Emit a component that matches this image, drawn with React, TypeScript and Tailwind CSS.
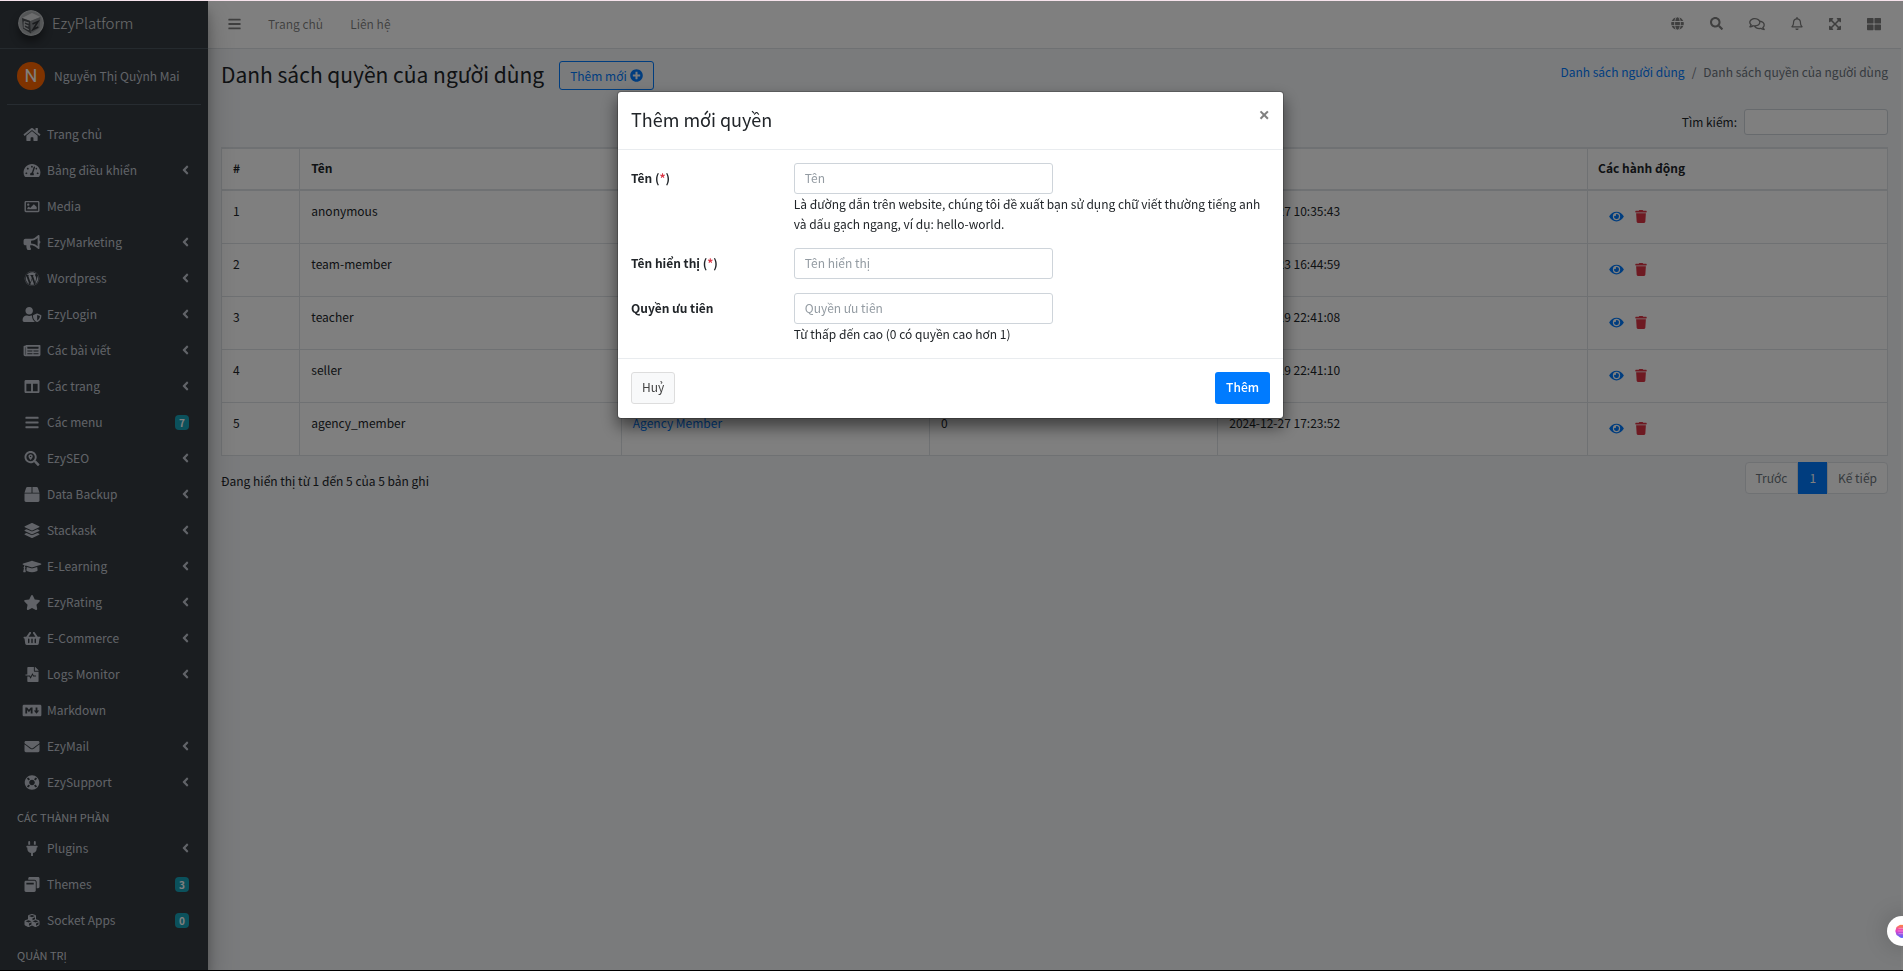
import { useState } from 'react';
import type { IconType } from 'react-icons';
import {
  FaAngleLeft,
  FaBars,
  FaBox,
  FaBullhorn,
  FaColumns,
  FaCubes,
  FaEnvelope,
  FaExpandArrowsAlt,
  FaEye,
  FaFileMedicalAlt,
  FaGlobe,
  FaGraduationCap,
  FaHome,
  FaLayerGroup,
  FaLifeRing,
  FaMarkdown,
  FaNewspaper,
  FaPlug,
  FaPlusCircle,
  FaRegBell,
  FaRegComments,
  FaRegImage,
  FaSearch,
  FaSearchLocation,
  FaShoppingBasket,
  FaStar,
  FaTachometerAlt,
  FaThLarge,
  FaTrash,
  FaUserShield,
  FaWindowRestore,
  FaWordpress,
} from 'react-icons/fa';

type MenuItem = {
  icon: IconType;
  label: string;
  badge?: number;
  arrow?: boolean;
};

const mainMenu: MenuItem[] = [
  { icon: FaHome, label: 'Trang chủ' },
  { icon: FaTachometerAlt, label: 'Bảng điều khiển', arrow: true },
  { icon: FaRegImage, label: 'Media' },
  { icon: FaBullhorn, label: 'EzyMarketing', arrow: true },
  { icon: FaWordpress, label: 'Wordpress', arrow: true },
  { icon: FaUserShield, label: 'EzyLogin', arrow: true },
  { icon: FaNewspaper, label: 'Các bài viết', arrow: true },
  { icon: FaColumns, label: 'Các trang', arrow: true },
  { icon: FaBars, label: 'Các menu', badge: 7 },
  { icon: FaSearchLocation, label: 'EzySEO', arrow: true },
  { icon: FaBox, label: 'Data Backup', arrow: true },
  { icon: FaLayerGroup, label: 'Stackask', arrow: true },
  { icon: FaGraduationCap, label: 'E-Learning', arrow: true },
  { icon: FaStar, label: 'EzyRating', arrow: true },
  { icon: FaShoppingBasket, label: 'E-Commerce', arrow: true },
  { icon: FaFileMedicalAlt, label: 'Logs Monitor', arrow: true },
  { icon: FaMarkdown, label: 'Markdown' },
  { icon: FaEnvelope, label: 'EzyMail', arrow: true },
  { icon: FaLifeRing, label: 'EzySupport', arrow: true },
];

const componentMenu: MenuItem[] = [
  { icon: FaPlug, label: 'Plugins', arrow: true },
  { icon: FaWindowRestore, label: 'Themes', badge: 3 },
  { icon: FaCubes, label: 'Socket Apps', badge: 0 },
];

const roles = [
  { id: 1, name: 'anonymous', displayName: 'Anonymous', priority: 0, createdAt: '2024-12-27 10:35:43' },
  { id: 2, name: 'team-member', displayName: 'Team Member', priority: 0, createdAt: '2024-12-23 16:44:59' },
  { id: 3, name: 'teacher', displayName: 'Teacher', priority: 0, createdAt: '2024-12-19 22:41:08' },
  { id: 4, name: 'seller', displayName: 'Seller', priority: 0, createdAt: '2024-12-19 22:41:10' },
  { id: 5, name: 'agency_member', displayName: 'Agency Member', priority: 0, createdAt: '2024-12-27 17:23:52' },
];

function Logo() {
  return (
    <svg viewBox="0 0 26 26" className="h-[26px] w-[26px] rounded-full shadow-[0_6px_8px_rgba(0,0,0,0.4)]">
      <circle cx="13" cy="13" r="13" fill="#b9bcbf" />
      <circle cx="13" cy="13" r="11.5" fill="#a9acaf" />
      <path d="M4 8 L14 3 L22.5 7 L12.5 11 Z" fill="#d9dbdd" />
      <path d="M4 8 L12.5 11 L13 23.5 L5 18.5 Z" fill="#4a4e52" />
      <path d="M12.5 11 L22.5 7 L21.5 18 L13 23.5 Z" fill="#84888c" />
      <path d="M6 11.5 L10.8 13.2 M6.2 11.5 V17.3 L10.8 19.8 M6.2 14.4 L10.4 16.2" stroke="#b9bcbf" strokeWidth="1.3" fill="none" />
      <path d="M14.5 14 L20 11.5 L15 19.5 L20.3 17" stroke="#33373b" strokeWidth="1.6" fill="none" />
    </svg>
  );
}

function MenuList({ items }: { items: MenuItem[] }) {
  return (
    <ul>
      {items.map(({ icon: Icon, label, badge, arrow }) => (
        <li key={label}>
          <a href="#" className="flex h-9 items-center gap-[3px] px-[19px]">
            <span className="flex w-[25px] justify-center">
              <Icon className="h-[15px] w-5" />
            </span>
            <span className="flex-1">{label}</span>
            {arrow && <FaAngleLeft className="h-[14px] w-[7px]" />}
            {badge !== undefined && (
              <span className="rounded bg-[#17a2b8] px-1 text-[10px] leading-[15px] font-bold text-white">
                {badge}
              </span>
            )}
          </a>
        </li>
      ))}
    </ul>
  );
}

function Sidebar() {
  return (
    <aside className="relative z-10 w-52 shrink-0 bg-[#343a40] text-[#c2c7d0] shadow-[0_14px_28px_rgba(0,0,0,0.25),0_10px_10px_rgba(0,0,0,0.22)]">
      <a href="#" className="flex h-12 items-center gap-2 border-b border-[#4b545c] pb-1 pl-[18px]">
        <Logo />
        <span className="text-[15px] leading-6 font-light text-white/80">EzyPlatform</span>
      </a>
      <div className="mx-[7px] flex h-14 items-center gap-[9px] border-b border-[#4f5962] pb-0.5 pl-[10px]">
        <span className="flex h-7 w-7 items-center justify-center rounded-full bg-[#ff6600] font-[Roboto] text-lg leading-7 text-white">
          N
        </span>
        <a href="#">Nguyễn Thị Quỳnh Mai</a>
      </div>
      <nav className="mt-[11px]">
        <MenuList items={mainMenu} />
        <div className="flex h-[30px] items-center pt-1 pl-[17px] text-[11px] text-[#d0d4db]">CÁC THÀNH PHẦN</div>
        <MenuList items={componentMenu} />
        <div className="flex h-[30px] items-center pt-1 pl-[17px] text-[11px] text-[#d0d4db]">QUẢN TRỊ</div>
      </nav>
    </aside>
  );
}

function Navbar() {
  return (
    <header className="flex h-12 items-center justify-between border-b border-[#dee2e6] bg-white px-5 pb-0.5 text-black/50">
      <div className="flex items-center gap-[27px]">
        <button type="button" aria-label="Menu"><FaBars className="h-[14px] w-[13px]" /></button>
        <a href="#">Trang chủ</a>
        <a href="#">Liên hệ</a>
      </div>
      <div className="flex items-center gap-[26px]">
        <button type="button" aria-label="Ngôn ngữ"><FaGlobe className="h-[13px] w-[13px]" /></button>
        <button type="button" aria-label="Tìm kiếm"><FaSearch className="h-[13px] w-[13px]" /></button>
        <button type="button" aria-label="Tin nhắn"><FaRegComments className="h-[14px] w-4" /></button>
        <button type="button" aria-label="Thông báo"><FaRegBell className="h-[13px] w-3" /></button>
        <button type="button" aria-label="Toàn màn hình"><FaExpandArrowsAlt className="h-[14px] w-3" /></button>
        <button type="button" aria-label="Ứng dụng"><FaThLarge className="h-[14px] w-[14px]" /></button>
      </div>
    </header>
  );
}

function RoleTable() {
  return (
    <table className="w-full table-fixed border-collapse border border-[#dee2e6] bg-white text-left">
      <thead>
        <tr className="h-[42px] border-t-2 border-b-2 border-[#dee2e6]">
          <th className="w-[4.7%] border-r border-[#dee2e6] px-[11px] pb-0.5">#</th>
          <th className="w-[19.3%] border-r border-[#dee2e6] px-[11px] pb-0.5">Tên</th>
          <th className="w-[18.5%] border-r border-[#dee2e6] px-[11px] pb-0.5">Tên hiển thị</th>
          <th className="w-[17.3%] border-r border-[#dee2e6] px-[11px] pb-0.5">Quyền ưu tiên</th>
          <th className="w-[22.2%] border-r border-[#dee2e6] px-[11px] pb-0.5">Ngày tạo</th>
          <th className="px-[10px] pb-0.5">Các hành động</th>
        </tr>
      </thead>
      <tbody>
        {roles.map((role) => (
          <tr key={role.id} className="h-[53px] border-b border-[#dee2e6] align-top">
            <td className="border-r border-[#dee2e6] px-[11px] pt-[10px]">{role.id}</td>
            <td className="border-r border-[#dee2e6] px-[11px] pt-[10px]">{role.name}</td>
            <td className="border-r border-[#dee2e6] px-[11px] pt-[10px]">
              <a href="#" className="text-[#007bff]">{role.displayName}</a>
            </td>
            <td className="border-r border-[#dee2e6] px-[11px] pt-[10px]">{role.priority}</td>
            <td className="border-r border-[#dee2e6] px-[11px] pt-[10px]">{role.createdAt}</td>
            <td className="px-[21px] pt-[19px]">
              <div className="flex items-center gap-[11px]">
                <a href="#" aria-label="Xem" className="text-[#007bff]"><FaEye className="h-[13px] w-[15px]" /></a>
                <button type="button" aria-label="Xoá" className="text-[#dc3545]"><FaTrash className="h-[13px] w-3" /></button>
              </div>
            </td>
          </tr>
        ))}
      </tbody>
    </table>
  );
}

function RolesPage() {
  return (
    <main className="px-[13px]">
      <div className="flex items-start justify-between pt-3">
        <div className="flex items-start gap-[15px]">
          <h1 className="text-[21px] leading-[27px] text-[#212529]">Danh sách quyền của người dùng</h1>
          <button
            type="button"
            className="flex h-[29px] items-center gap-[3px] rounded-[3px] border border-[#007bff] px-[10px] text-[#007bff]"
          >
            Thêm mới
            <FaPlusCircle className="h-[13px] w-[13px]" />
          </button>
        </div>
        <nav className="flex gap-[7px] pt-px text-[#6c757d]">
          <a href="#" className="text-[#007bff]">Danh sách người dùng</a>
          <span>/</span>
          <span>Danh sách quyền của người dùng</span>
        </nav>
      </div>

      <div className="mt-[19px] flex items-center justify-end gap-[7px]">
        <label htmlFor="search">Tìm kiếm:</label>
        <input
          id="search"
          type="search"
          className="h-[26px] w-36 rounded-[3px] border border-[#ced4da] bg-white px-2 outline-none"
        />
      </div>

      <div className="mt-3">
        <RoleTable />
      </div>

      <div className="mt-1.5 flex items-start justify-between">
        <p className="pt-[9px]">Đang hiển thị từ 1 đến 5 của 5 bản ghi</p>
        <div className="flex h-8 text-[#6c757d]">
          <button type="button" className="rounded-l border border-[#dee2e6] bg-white px-[10px]">Trước</button>
          <button type="button" className="bg-[#007bff] px-[11px] text-white">1</button>
          <button type="button" className="rounded-r border border-[#dee2e6] bg-white px-[10px]">Kế tiếp</button>
        </div>
      </div>
    </main>
  );
}

function AddRoleModal({ onClose }: { onClose: () => void }) {
  return (
    <div className="fixed inset-x-0 top-px bottom-px z-20 bg-black/50 pr-0.5">
      <div
        role="dialog"
        aria-labelledby="modal-title"
        className="mx-auto mt-[90px] w-full max-w-[667px] rounded border border-black/20 bg-white bg-clip-padding shadow-[0_8px_16px_rgba(0,0,0,0.5)]"
      >
        <div className="flex h-[58px] items-start justify-between border-b border-[#e9ecef] px-[13px] pt-[15px]">
          <h2 id="modal-title" className="text-lg leading-6">Thêm mới quyền</h2>
          <button
            type="button"
            aria-label="Đóng"
            onClick={onClose}
            className="font-['Open_Sans'] text-xl leading-4 font-bold text-black/50"
          >
            ×
          </button>
        </div>

        <form id="role-form" className="flex flex-col gap-[14px] px-[13px] pt-[13px] pb-[14px]">
          <div className="grid grid-cols-4 gap-x-3">
            <label htmlFor="name" className="pt-[5px] font-bold">
              Tên (<span className="text-[#dc3545]">*</span>)
            </label>
            <div className="col-span-3">
              <input
                id="name"
                placeholder="Tên"
                className="block h-[31px] w-full max-w-[259px] rounded-[3px] border border-[#ced4da] px-[10px] pb-0.5 outline-none placeholder:text-[#939ba2]"
              />
              <p>
                Là đường dẫn trên website, chúng tôi đề xuất bạn sử dụng chữ viết thường tiếng anh và dấu gạch ngang, ví
                dụ: hello-world.
              </p>
            </div>
          </div>
          <div className="grid grid-cols-4 gap-x-3">
            <label htmlFor="display-name" className="pt-[5px] font-bold">
              Tên hiển thị (<span className="text-[#dc3545]">*</span>)
            </label>
            <div className="col-span-3">
              <input
                id="display-name"
                placeholder="Tên hiển thị"
                className="block h-[31px] w-full max-w-[259px] rounded-[3px] border border-[#ced4da] px-[10px] pb-0.5 outline-none placeholder:text-[#939ba2]"
              />
            </div>
          </div>
          <div className="grid grid-cols-4 gap-x-3">
            <label htmlFor="priority" className="pt-[5px] font-bold">Quyền ưu tiên</label>
            <div className="col-span-3">
              <input
                id="priority"
                placeholder="Quyền ưu tiên"
                className="block h-[31px] w-full max-w-[259px] rounded-[3px] border border-[#ced4da] px-[10px] pb-0.5 outline-none placeholder:text-[#939ba2]"
              />
              <p>Từ thấp đến cao (0 có quyền cao hơn 1)</p>
            </div>
          </div>
        </form>

        <div className="flex justify-between border-t border-[#e9ecef] px-[13px] pt-[13px] pb-[14px]">
          <button
            type="button"
            onClick={onClose}
            className="h-8 rounded-[3px] border border-[#ddd] bg-[#f8f9fa] px-[10px] pb-0.5 text-[#444]"
          >
            Huỷ
          </button>
          <button
            type="submit"
            form="role-form"
            className="h-8 rounded-[3px] bg-[#007bff] px-[11px] pb-0.5 font-medium text-white"
          >
            Thêm
          </button>
        </div>
      </div>
    </div>
  );
}

function AssistantBubble() {
  return (
    <button
      type="button"
      aria-label="Trợ lý"
      className="fixed -right-[14px] bottom-[25px] z-30 flex h-[30px] w-[30px] items-center justify-center rounded-full bg-white shadow-[0_0_24px_rgba(0,0,0,0.2)]"
    >
      <svg viewBox="0 0 16 16" className="h-[14px] w-[14px]">
        <defs>
          <linearGradient id="bubble" x1="0" y1="0" x2="0" y2="1">
            <stop offset="0" stopColor="#ff8a3c" />
            <stop offset="0.45" stopColor="#e83fc4" />
            <stop offset="1" stopColor="#4b6bff" />
          </linearGradient>
        </defs>
        <path
          d="M8 1a4 4 0 0 1 4 1.2A4 4 0 0 1 15 6a4 4 0 0 1 0 4a4 4 0 0 1-3 4a5 5 0 0 1-8 0a4 4 0 0 1-3-4a4 4 0 0 1 0-4a4 4 0 0 1 3-4A5 5 0 0 1 8 1z"
          fill="url(#bubble)"
        />
        <path d="M4 5h8M3 8h10M4 11h8" stroke="#fff" strokeOpacity="0.5" strokeWidth="0.8" />
      </svg>
    </button>
  );
}

export default function App() {
  const [open, setOpen] = useState(true);

  return (
    <div className="flex h-screen overflow-hidden border-t border-b border-t-[#f6e3ec] border-b-black bg-[#f4f6f9] font-['Noto_Sans_CJK_SC',sans-serif] text-xs leading-5 text-[#212529]">
      <Sidebar />
      <div className="min-w-0 flex-1 border-r-2 border-white">
        <Navbar />
        <RolesPage />
      </div>
      {open && <AddRoleModal onClose={() => setOpen(false)} />}
      <AssistantBubble />
    </div>
  );
}
